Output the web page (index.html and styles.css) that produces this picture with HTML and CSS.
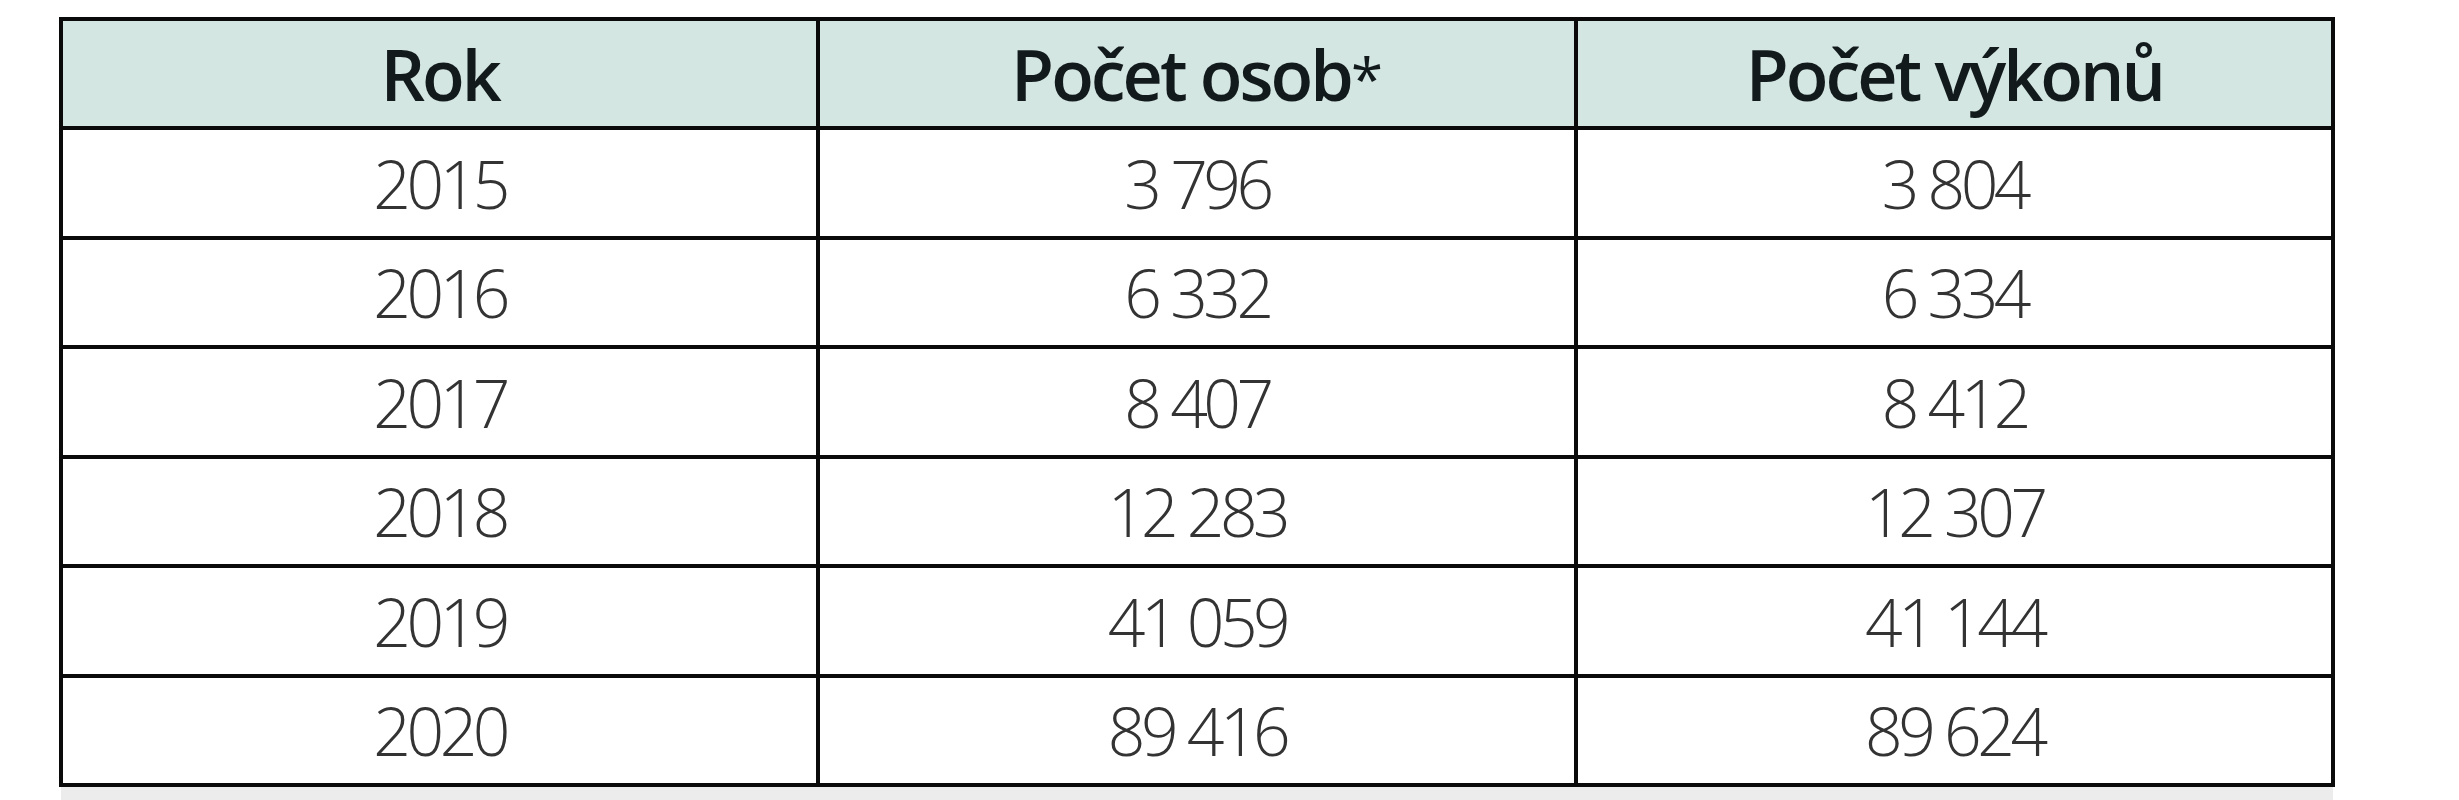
FILE: index.html
```html
<!DOCTYPE html>
<html lang="cs">
<head>
<meta charset="utf-8">
<title>Tabulka</title>
<link rel="stylesheet" href="styles.css">
</head>
<body>
<div class="wrap">
  <table class="data">
    <thead>
      <tr><th>Rok</th><th>Počet osob<span class="ast">*</span></th><th>Počet výkonů</th></tr>
    </thead>
    <tbody>
      <tr><td>2015</td><td>3 796</td><td>3 804</td></tr>
      <tr><td>2016</td><td>6 332</td><td>6 334</td></tr>
      <tr><td>2017</td><td>8 407</td><td>8 412</td></tr>
      <tr><td>2018</td><td>12 283</td><td>12 307</td></tr>
      <tr><td>2019</td><td>41 059</td><td>41 144</td></tr>
      <tr><td>2020</td><td>89 416</td><td>89 624</td></tr>
    </tbody>
  </table>
  <div class="below"></div>
</div>
</body>
</html>
```

FILE: styles.css
```css
html, body {
  margin: 0;
  padding: 0;
  background: #ffffff;
}
.wrap {
  padding: 17px 0 0 59px;
  width: 2276px;
}
.data {
  border-collapse: collapse;
  width: 2276px;
  table-layout: fixed;
  font-family: "Open Sans", "Noto Sans", sans-serif;
}
.data th, .data td {
  border: 4px solid #0a0a0a;
  text-align: center;
  vertical-align: middle;
  padding: 0;
  line-height: 1;
}
.data th {
  height: 105px;
  background: #d3e6e1;
  color: #121a1c;
  font-weight: 600;
  font-size: 70px;
  letter-spacing: -3px;
}
.ast {
  font-size: 58px;
  font-weight: 500;
  letter-spacing: 0;
}
.data td {
  height: 105.5px;
  color: #333333;
  font-weight: 300;
  font-size: 66px;
  letter-spacing: -4.5px;
  white-space: nowrap;
}
.below {
  height: 14px;
  margin-left: 2px;
  width: 2272px;
  background: #ececec;
}
```
